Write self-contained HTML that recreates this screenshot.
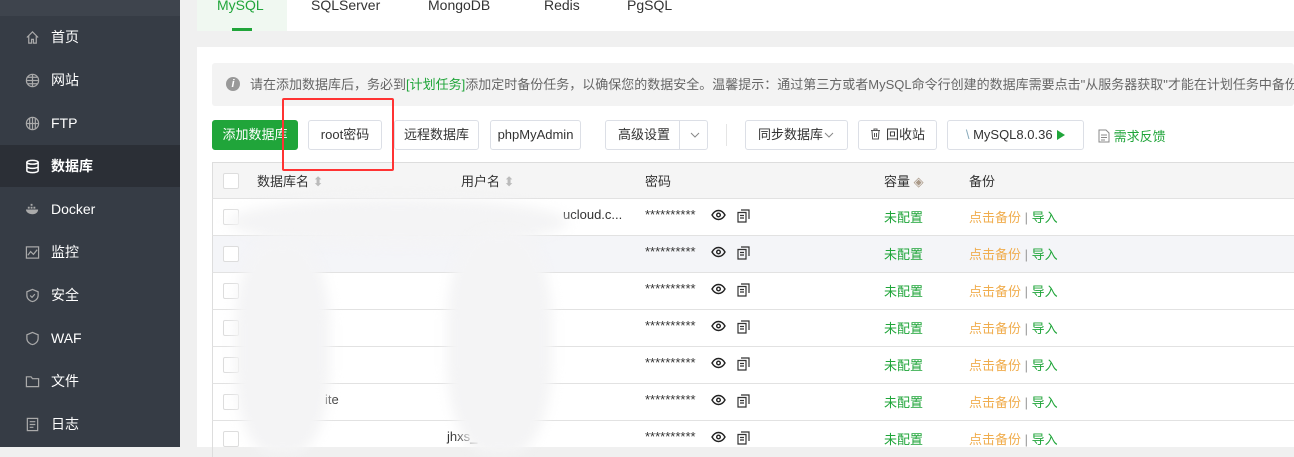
<!DOCTYPE html>
<html><head><meta charset="utf-8"><style>
*{box-sizing:border-box;margin:0;padding:0}
body{width:1294px;height:447px;overflow:hidden;background:#f0f0f0;font-family:"Liberation Sans","Noto Sans CJK SC",sans-serif;font-size:13px;color:#333;position:relative}
.side{position:absolute;left:0;top:0;width:180px;height:447px;background:#363c45}
.side .top{height:16px;background:#3e444d}
.item{position:absolute;left:0;width:180px;height:42px;display:flex;align-items:center;padding-left:25px;color:#fff;font-size:14px}
.item.act{background:#2b2f36;font-weight:bold}
.item svg{width:15px;height:15px;margin-right:11px}
.tabs{position:absolute;left:197px;top:0;width:1097px;height:31px;background:#fff}
.tab{position:absolute;top:-3px;font-size:14px;color:#333}
.card{position:absolute;left:197px;top:47px;width:1097px;height:400px;background:#fff}
.tip{position:absolute;left:212px;top:63px;width:1082px;height:43px;background:#f3f3f3;border-radius:3px;color:#666;font-size:13px;line-height:43px;padding-left:38px;white-space:nowrap;overflow:hidden}
.btn{position:absolute;top:120px;height:30px;border:1px solid #dcdfe6;border-radius:3px;background:#fff;font-size:13px;line-height:28px;text-align:center;color:#333}
.tbl{position:absolute;left:212px;top:162px;width:1082px;height:290px;border-left:1px solid #ddd}
.row{position:absolute;left:0;width:1082px;height:37px;border-top:1px solid #e2e2e2}
.cb{position:absolute;left:10px;top:10px;width:16px;height:16px;border:1px solid #ddd;border-radius:2px;background:#fff}
.t{position:absolute;top:8px;white-space:nowrap}
.ic{position:absolute;top:10px}
.g{color:#20a53a}.o{color:#f0ad4e}
.blob{position:absolute;background:#f4f4f5;filter:blur(6px);border-radius:50%}
</style></head><body>
<div class="side"><div class="top"></div>
<div class="item" style="top:16px"><svg viewBox="0 0 16 16" fill="none" stroke="#aaa" stroke-width="1.3"><path d="M2 8L8 2l6 6M4 6.5V14h3v-4h2v4h3V6.5"/></svg>首页</div>
<div class="item" style="top:59px"><svg viewBox="0 0 16 16" fill="none" stroke="#aaa" stroke-width="1.3"><circle cx="8" cy="8" r="6.5"/><path d="M1.5 8h13M8 1.5v13M3 4.5h10M3 11.5h10"/></svg>网站</div>
<div class="item" style="top:102px"><svg viewBox="0 0 16 16" fill="none" stroke="#aaa" stroke-width="1.3"><circle cx="8" cy="8" r="6.5"/><path d="M1.5 8h13M8 1.5v13M5 2.5v11M11 2.5v11"/></svg>FTP</div>
<div class="item act" style="top:145px"><svg viewBox="0 0 16 16" fill="none" stroke="#fff" stroke-width="1.6"><ellipse cx="8" cy="3.5" rx="6" ry="2"/><path d="M2 3.5v9c0 1.1 2.7 2 6 2s6-.9 6-2v-9M2 8c0 1.1 2.7 2 6 2s6-.9 6-2"/></svg>数据库</div>
<div class="item" style="top:188px"><svg viewBox="0 0 16 16" fill="#aaa"><path d="M1 8h13c0 3-2.5 5-6 5S1 11 1 8zM3 5h2v2H3zM6 5h2v2H6zM9 5h2v2H9zM6 2h2v2H6z"/></svg>Docker</div>
<div class="item" style="top:231px"><svg viewBox="0 0 16 16" fill="none" stroke="#aaa" stroke-width="1.3"><rect x="1.5" y="2" width="13" height="12"/><path d="M3 11l3-4 3 3 4-5"/></svg>监控</div>
<div class="item" style="top:274px"><svg viewBox="0 0 16 16" fill="none" stroke="#aaa" stroke-width="1.3"><path d="M8 1.5l6 2.5v4c0 3.5-3 5.8-6 6.5-3-.7-6-3-6-6.5V4z"/><path d="M5.5 8l2 2 3-3.5"/></svg>安全</div>
<div class="item" style="top:317px"><svg viewBox="0 0 16 16" fill="none" stroke="#aaa" stroke-width="1.3"><path d="M8 1.5l6 2.5v4c0 3.5-3 5.8-6 6.5-3-.7-6-3-6-6.5V4z"/></svg>WAF</div>
<div class="item" style="top:360px"><svg viewBox="0 0 16 16" fill="none" stroke="#aaa" stroke-width="1.3"><path d="M1.5 3h5l1.5 2h6.5v8.5h-13z"/></svg>文件</div>
<div class="item" style="top:403px"><svg viewBox="0 0 16 16" fill="none" stroke="#aaa" stroke-width="1.3"><rect x="2.5" y="1.5" width="11" height="13"/><path d="M5 5h6M5 8h6M5 11h4"/></svg>日志</div>
</div>
<div class="tabs">
<div style="position:absolute;left:0;top:0;width:90px;height:31px;background:#f0f8f1"></div>
<div style="position:absolute;left:35px;top:28px;width:20px;height:3px;background:#20a53a"></div>
<div class="tab g" style="left:20px;color:#20a53a">MySQL</div>
<div class="tab" style="left:114px">SQLServer</div>
<div class="tab" style="left:231px">MongoDB</div>
<div class="tab" style="left:347px">Redis</div>
<div class="tab" style="left:430px">PgSQL</div>
</div>
<div class="card"></div>
<div class="tip"><span style="position:absolute;left:14px;top:14px;width:14px;height:14px;border-radius:50%;background:#999;color:#fff;font-size:11px;line-height:14px;text-align:center;font-weight:bold;font-style:italic">i</span>请在添加数据库后，务必到<span class="g">[计划任务]</span>添加定时备份任务，以确保您的数据安全。温馨提示：通过第三方或者MySQL命令行创建的数据库需要点击"从服务器获取"才能在计划任务中备份</div>
<div class="btn" style="left:212px;width:86px;background:#20a53a;border-color:#20a53a;color:#fff">添加数据库</div>
<div class="btn" style="left:308px;width:74px">root密码</div>
<div class="btn" style="left:394px;width:85px">远程数据库</div>
<div class="btn" style="left:490px;width:91px">phpMyAdmin</div>
<div class="btn" style="left:605px;width:103px;text-align:left;padding-left:12px">高级设置<span style="position:absolute;left:73px;top:0;width:1px;height:28px;background:#dcdfe6"></span><svg style="position:absolute;left:84px;top:10px" width="10" height="8" viewBox="0 0 10 8" fill="none" stroke="#888"><path d="M1 2l4 4 4-4"/></svg></div>
<div style="position:absolute;left:726px;top:124px;width:1px;height:22px;background:#e5e5e5"></div>
<div class="btn" style="left:745px;width:103px;text-align:left;padding-left:12px">同步数据库<svg style="position:absolute;left:78px;top:10px" width="10" height="8" viewBox="0 0 10 8" fill="none" stroke="#888"><path d="M1 2l4 4 4-4"/></svg></div>
<div class="btn" style="left:858px;width:79px"><svg width="11" height="12" viewBox="0 0 11 12" fill="none" stroke="#555" style="vertical-align:-1px;margin-right:5px"><path d="M1 2.5h9M4 2.5V1h3v1.5M2 2.5l.6 8.5h5.8l.6-8.5M4.5 5v4M6.5 5v4"/></svg>回收站</div>
<div class="btn" style="left:947px;width:137px"><span style="color:#8ab">\</span> MySQL8.0.36 <svg width="9" height="10" viewBox="0 0 9 10" style="vertical-align:-1px"><path d="M1 0l8 5-8 5z" fill="#20a53a"/></svg></div>
<div style="position:absolute;left:1098px;top:126px;font-size:13px" class="g"><svg width="12" height="14" viewBox="0 0 12 14" fill="none" stroke="#888" style="vertical-align:-2px"><path d="M1 1h7l3 3v9H1z M3 6h6M3 8.5h6M3 11h4"/></svg> 需求反馈</div>
<div class="tbl">
<div class="row" style="top:0;height:36px;background:#f5f5f5;border-top-color:#ddd"><div class="cb"></div><div class="t" style="left:44px">数据库名 <span style="color:#bbb">⬍</span></div><div class="t" style="left:248px">用户名 <span style="color:#bbb">⬍</span></div><div class="t" style="left:432px">密码</div><div class="t" style="left:671px">容量 <span style="color:#a98">◈</span></div><div class="t" style="left:756px">备份</div></div>
</div>
<div id="rows"></div>
<div class="blob" style="left:228px;top:198px;width:340px;height:48px"></div>
<div class="blob" style="left:235px;top:240px;width:95px;height:215px;border-radius:40%"></div>
<div class="blob" style="left:447px;top:230px;width:105px;height:225px;border-radius:40%"></div>
<div style="position:absolute;left:282px;top:98px;width:112px;height:73px;border:2px solid #f33;border-radius:2px"></div>
<script>
var extra=['<div class="t" style="left:350px">ucloud.c...</div>','','','','','<div class="t" style="left:112px">ite</div>','<div class="t" style="left:234px">jhxs_</div>'];
var h='';
for(var i=0;i<7;i++){
h+='<div class="row" style="left:212px;top:'+(198+37*i)+'px;'+(i==1?'background:#f4f5f8;':'')+'border-left:1px solid #ddd"><div class="cb"></div>'+extra[i]+
'<div class="t" style="left:432px">**********</div>'+
'<svg class="ic" style="left:498px" width="15" height="12" viewBox="0 0 15 12" fill="none" stroke="#222" stroke-width="1.4"><path d="M1 6c2-3.5 4-4.5 6.5-4.5S12 2.5 14 6c-2 3.5-4 4.5-6.5 4.5S3 9.5 1 6z"/><circle cx="7.5" cy="6" r="1.8"/></svg>'+
'<svg class="ic" style="left:524px" width="13" height="14" viewBox="0 0 13 14" fill="none" stroke="#333" stroke-width="1.2"><path d="M4 1h8v9M1 3.5h8V13H1zM3 6.5h4M3 9h4"/></svg>'+
'<div class="t g" style="left:671px">未配置</div><div class="t" style="left:756px"><span class="o">点击备份</span> <span style="color:#999">|</span> <span class="g">导入</span></div></div>';
}
document.getElementById('rows').innerHTML=h;
</script>
</body></html>
